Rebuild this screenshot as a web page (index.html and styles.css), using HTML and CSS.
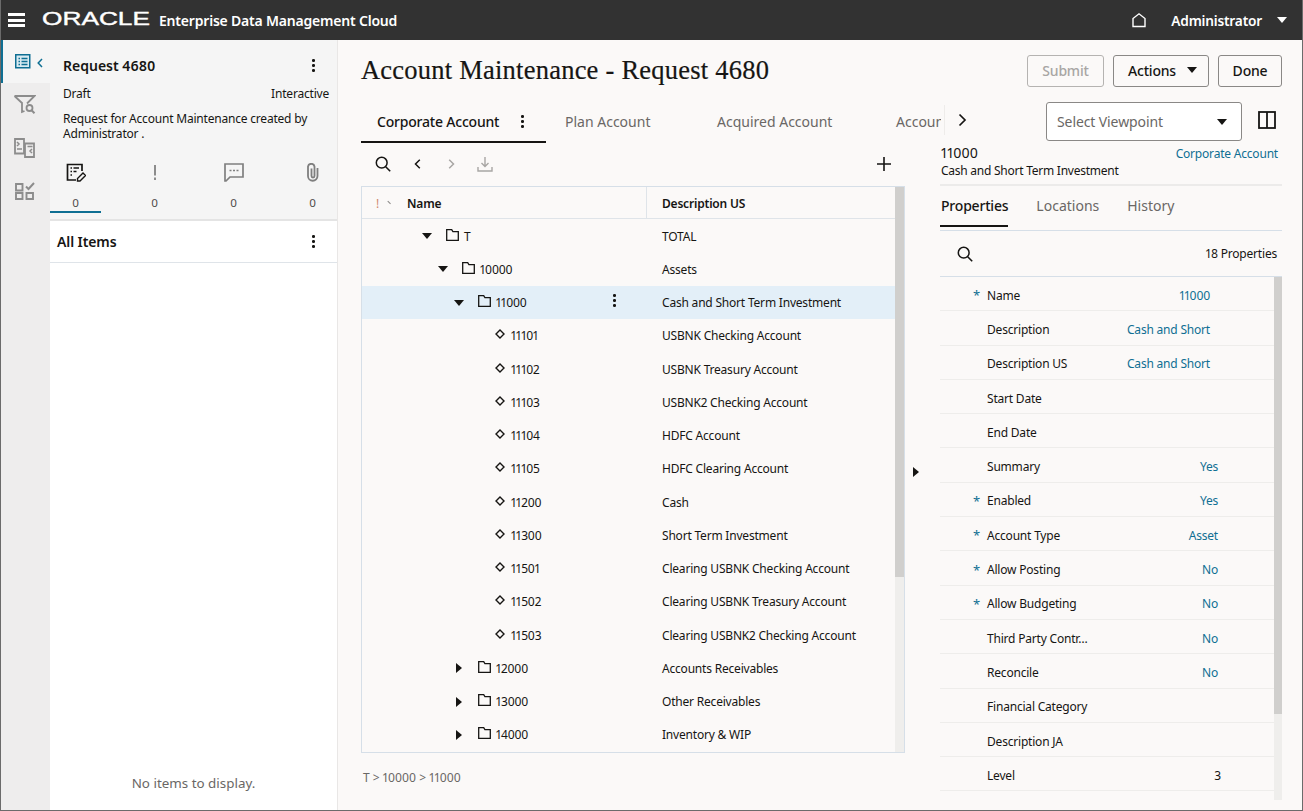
FILE: index.html
```html
<!DOCTYPE html>
<html lang="en">
<head>
<meta charset="utf-8">
<title>Account Maintenance - Request 4680</title>
<link rel="stylesheet" href="styles.css">
</head>
<body>
<div class="app">
  <header class="topbar">
    <button class="burger"><span></span><span></span><span></span></button>
    <svg class="logo" width="110" height="24" viewBox="0 0 110 24"><text x="0" y="17" textLength="108" lengthAdjust="spacingAndGlyphs" class="logo-text">ORACLE</text></svg>
    <span class="product">Enterprise Data Management Cloud</span>
    <span class="spacer"></span>
    <svg class="home" width="16" height="16" viewBox="0 0 16 16"><path d="M2 14.5V6.5L8 1.8l6 4.7v8z" fill="none" stroke="#fff" stroke-width="1.4"/></svg>
    <span class="user">Administrator</span>
    <span class="caret-down white"></span>
  </header>
  <div class="body">
    <nav class="rail">
      <div class="rail-item active">
        <svg width="16" height="15" viewBox="0 0 16 15"><rect x=".75" y=".75" width="14" height="13" fill="#d9ebf2" stroke="#0f6f93" stroke-width="1.5"/><path d="M3.5 4.5h1.5M3.5 7.5h1.5M3.5 10.5h1.5M6.5 4.5h6M6.5 7.5h6M6.5 10.5h6" stroke="#0f6f93" stroke-width="1.5"/></svg>
        <svg class="collapse" width="6" height="10" viewBox="0 0 6 10"><path d="M5 1L1.2 5 5 9" fill="none" stroke="#0f6f93" stroke-width="1.5"/></svg>
      </div>
      <div class="rail-item">
        <svg width="23" height="20" viewBox="0 0 23 20"><path d="M1.5 1h20l-7.5 7.5M9.5 8.5L1.5 1M9 8v9l2.5-1" fill="none" stroke="#8c8c8c" stroke-width="1.8"/><circle cx="16.5" cy="13" r="3" fill="none" stroke="#8c8c8c" stroke-width="1.8"/><path d="M18.8 15.5l2.7 2.7" stroke="#8c8c8c" stroke-width="2"/></svg>
      </div>
      <div class="rail-item">
        <svg width="21" height="20" viewBox="0 0 21 20"><path d="M10 15.5H1V1h9zM11 5.5h9V19h-9z" fill="none" stroke="#8c8c8c" stroke-width="1.8"/><path d="M3 4l2 2-2 2M3 11h5M13.5 8.5h5M18 11l-2 2 2 2" fill="none" stroke="#8c8c8c" stroke-width="1.5"/></svg>
      </div>
      <div class="rail-item">
        <svg width="20" height="19" viewBox="0 0 20 19"><path d="M1 3h6.5v6.5H1zM1 12h6.5v6H1zM11.5 12H18v6h-6.5z" fill="none" stroke="#8c8c8c" stroke-width="1.9"/><path d="M11 5.5l2.5 2.5L19 2" fill="none" stroke="#8c8c8c" stroke-width="2"/></svg>
      </div>
    </nav>
    <aside class="side">
      <section class="side-top">
        <div class="req-head"><h2>Request 4680</h2><span class="kebab"><i></i><i></i><i></i></span></div>
        <div class="req-meta"><span>Draft</span><span>Interactive</span></div>
        <p class="req-desc">Request for Account Maintenance created by Administrator .</p>
        <div class="counts">
          <div class="count on">
            <svg width="20" height="19" viewBox="0 0 20 19"><path d="M10 17H1.5V1.5H16V8" fill="none" stroke="#161513" stroke-width="1.7"/><path d="M4.5 5H6M7.500 5H13M4.500 8.500H6M7.500 8.500h3M4.500 12H6" stroke="#161513" stroke-width="1.5"/><path d="M11.500 18v-2.500l5.500-5.500 2.500 2.500-5.500 5.500z" fill="none" stroke="#161513" stroke-width="1.4"/></svg>
            <b>0</b>
          </div>
          <div class="count"><svg width="20" height="19" viewBox="0 0 20 19"><path d="M10 2v10.500M10 14.500V17" stroke="#8c8c8c" stroke-width="2"/></svg><b>0</b></div>
          <div class="count"><svg width="20" height="19" viewBox="0 0 20 19"><path d="M1 1h18v13H6l-4 4H1z" fill="none" stroke="#7f7f7f" stroke-width="1.7"/><path d="M5.500 7.500h2M9 7.500h2M12.500 7.500h2" stroke="#7f7f7f" stroke-width="1.6"/></svg><b>0</b></div>
          <div class="count"><svg width="20" height="19" viewBox="0 0 20 19"><path d="M9 5.500V13a1.500 1.500 0 0 0 3 0V3.500a3.300 3.300 0 0 0-6.500 0V13a4.700 4.700 0 0 0 9.500 0V5" fill="none" stroke="#7f7f7f" stroke-width="1.8" transform="translate(-.5 0)"/></svg><b>0</b></div>
        </div>
      </section>
      <section class="side-list">
        <div class="list-head"><h3>All Items</h3><span class="kebab"><i></i><i></i><i></i></span></div>
        <div class="list-empty">No items to display.</div>
      </section>
    </aside>
    <main class="main">
      <div class="title-row">
        <h1>Account Maintenance - Request 4680</h1>
        <div class="actions">
          <button class="btn disabled">Submit</button>
          <button class="btn btn-actions">Actions<span class="caret-down"></span></button>
          <button class="btn btn-done">Done</button>
        </div>
      </div>
      <div class="tabs-row">
        <div class="tabs">
          <div class="tab current">Corporate Account<span class="kebab"><i></i><i></i><i></i></span></div>
          <div class="tab t2">Plan Account</div>
          <div class="tab t3">Acquired Account</div>
          <div class="tab t4">Account</div>
        </div>
        <div class="tab-more"><svg width="9" height="14" viewBox="0 0 9 14"><path d="M1.500 1.500L7 7l-5.500 5.500" fill="none" stroke="#161513" stroke-width="1.7"/></svg></div>
        <div class="select"><span>Select Viewpoint</span><span class="caret-down"></span></div>
        <svg class="split" width="18" height="18" viewBox="0 0 18 18"><rect x="1" y="1" width="16" height="16" fill="none" stroke="#161513" stroke-width="1.8"/><path d="M9 1v16" stroke="#161513" stroke-width="1.8"/></svg>
      </div>
      <div class="work">
        <div class="center">
          <div class="toolbar">
            <svg class="ic-search" width="16" height="16" viewBox="0 0 16 16"><circle cx="6.7" cy="6.7" r="5.4" fill="none" stroke="#161513" stroke-width="1.5"/><path d="M10.7 10.7l4.5 4.5" stroke="#161513" stroke-width="1.6"/></svg>
            <svg class="ic-prev" width="7" height="10" viewBox="0 0 7 10"><path d="M5.8 .8L1.5 5l4.3 4.2" fill="none" stroke="#161513" stroke-width="1.5"/></svg>
            <svg class="ic-next" width="7" height="10" viewBox="0 0 7 10"><path d="M1.2 .8L5.5 5 1.2 9.2" fill="none" stroke="#a8a6a4" stroke-width="1.5"/></svg>
            <svg class="ic-down" width="16" height="16" viewBox="0 0 16 16"><path d="M8 1v9M4.5 7L8 10.5 11.5 7M1 11v4h14v-4" fill="none" stroke="#a8a6a4" stroke-width="1.4"/></svg>
            <span class="spacer"></span>
            <svg class="ic-plus" width="16" height="16" viewBox="0 0 16 16"><path d="M8 1v14M1 8h14" stroke="#161513" stroke-width="1.6"/></svg>
          </div>
          <div class="grid">
            <div class="grid-body">
              <div class="grid-head">
                <div class="cell-name head"><span class="bang">!</span><span class="tick"></span><span>Name</span></div>
                <div class="cell-desc head">Description US</div>
              </div>
              <div class="row"><div class="cell-name lv0"><span class="caret-tree open"></span><svg class="folder" width="13" height="12" viewBox="0 0 13 12"><path d="M.7.7h5l1.2 2h5.4v8.600H.7z" fill="none" stroke="#161513" stroke-width="1.3"/></svg><span>T</span></div><div class="cell-desc">TOTAL</div></div>
              <div class="row"><div class="cell-name lv1"><span class="caret-tree open"></span><svg class="folder" width="13" height="12" viewBox="0 0 13 12"><path d="M.7.7h5l1.2 2h5.4v8.600H.7z" fill="none" stroke="#161513" stroke-width="1.3"/></svg><span>10000</span></div><div class="cell-desc">Assets</div></div>
              <div class="row selected"><div class="cell-name lv2"><span class="caret-tree open"></span><svg class="folder" width="13" height="12" viewBox="0 0 13 12"><path d="M.7.7h5l1.2 2h5.4v8.600H.7z" fill="none" stroke="#161513" stroke-width="1.3"/></svg><span>11000</span><span class="kebab row-kebab"><i></i><i></i><i></i></span></div><div class="cell-desc">Cash and Short Term Investment</div></div>
              <div class="row"><div class="cell-name lv3"><svg class="node" width="10" height="10" viewBox="0 0 10 10"><path d="M5 1l4 4-4 4-4-4z" fill="none" stroke="#161513" stroke-width="1.4"/></svg><span>11101</span></div><div class="cell-desc">USBNK Checking Account</div></div>
              <div class="row"><div class="cell-name lv3"><svg class="node" width="10" height="10" viewBox="0 0 10 10"><path d="M5 1l4 4-4 4-4-4z" fill="none" stroke="#161513" stroke-width="1.4"/></svg><span>11102</span></div><div class="cell-desc">USBNK Treasury Account</div></div>
              <div class="row"><div class="cell-name lv3"><svg class="node" width="10" height="10" viewBox="0 0 10 10"><path d="M5 1l4 4-4 4-4-4z" fill="none" stroke="#161513" stroke-width="1.4"/></svg><span>11103</span></div><div class="cell-desc">USBNK2 Checking Account</div></div>
              <div class="row"><div class="cell-name lv3"><svg class="node" width="10" height="10" viewBox="0 0 10 10"><path d="M5 1l4 4-4 4-4-4z" fill="none" stroke="#161513" stroke-width="1.4"/></svg><span>11104</span></div><div class="cell-desc">HDFC Account</div></div>
              <div class="row"><div class="cell-name lv3"><svg class="node" width="10" height="10" viewBox="0 0 10 10"><path d="M5 1l4 4-4 4-4-4z" fill="none" stroke="#161513" stroke-width="1.4"/></svg><span>11105</span></div><div class="cell-desc">HDFC Clearing Account</div></div>
              <div class="row"><div class="cell-name lv3"><svg class="node" width="10" height="10" viewBox="0 0 10 10"><path d="M5 1l4 4-4 4-4-4z" fill="none" stroke="#161513" stroke-width="1.4"/></svg><span>11200</span></div><div class="cell-desc">Cash</div></div>
              <div class="row"><div class="cell-name lv3"><svg class="node" width="10" height="10" viewBox="0 0 10 10"><path d="M5 1l4 4-4 4-4-4z" fill="none" stroke="#161513" stroke-width="1.4"/></svg><span>11300</span></div><div class="cell-desc">Short Term Investment</div></div>
              <div class="row"><div class="cell-name lv3"><svg class="node" width="10" height="10" viewBox="0 0 10 10"><path d="M5 1l4 4-4 4-4-4z" fill="none" stroke="#161513" stroke-width="1.4"/></svg><span>11501</span></div><div class="cell-desc">Clearing USBNK Checking Account</div></div>
              <div class="row"><div class="cell-name lv3"><svg class="node" width="10" height="10" viewBox="0 0 10 10"><path d="M5 1l4 4-4 4-4-4z" fill="none" stroke="#161513" stroke-width="1.4"/></svg><span>11502</span></div><div class="cell-desc">Clearing USBNK Treasury Account</div></div>
              <div class="row"><div class="cell-name lv3"><svg class="node" width="10" height="10" viewBox="0 0 10 10"><path d="M5 1l4 4-4 4-4-4z" fill="none" stroke="#161513" stroke-width="1.4"/></svg><span>11503</span></div><div class="cell-desc">Clearing USBNK2 Checking Account</div></div>
              <div class="row"><div class="cell-name lv2"><span class="caret-tree closed"></span><svg class="folder" width="13" height="12" viewBox="0 0 13 12"><path d="M.7.7h5l1.2 2h5.4v8.600H.7z" fill="none" stroke="#161513" stroke-width="1.3"/></svg><span>12000</span></div><div class="cell-desc">Accounts Receivables</div></div>
              <div class="row"><div class="cell-name lv2"><span class="caret-tree closed"></span><svg class="folder" width="13" height="12" viewBox="0 0 13 12"><path d="M.7.7h5l1.2 2h5.4v8.600H.7z" fill="none" stroke="#161513" stroke-width="1.3"/></svg><span>13000</span></div><div class="cell-desc">Other Receivables</div></div>
              <div class="row"><div class="cell-name lv2"><span class="caret-tree closed"></span><svg class="folder" width="13" height="12" viewBox="0 0 13 12"><path d="M.7.7h5l1.2 2h5.4v8.600H.7z" fill="none" stroke="#161513" stroke-width="1.3"/></svg><span>14000</span></div><div class="cell-desc">Inventory &amp; WIP</div></div>
            </div>
            <div class="vbar"><div class="thumb tree-thumb"></div></div>
          </div>
          <div class="crumbs">T &gt; 10000 &gt; 11000</div>
        </div>
        <div class="splitter"><span class="caret-tree closed"></span></div>
        <div class="detail">
          <div class="d-head">
            <div class="d-title"><span class="d-id">11000</span><a class="d-link">Corporate Account</a></div>
            <div class="d-name">Cash and Short Term Investment</div>
          </div>
          <div class="d-tabs"><span class="d-tab current">Properties</span><span class="d-tab">Locations</span><span class="d-tab">History</span></div>
          <div class="d-search">
            <svg width="16" height="16" viewBox="0 0 16 16"><circle cx="6.7" cy="6.7" r="5.4" fill="none" stroke="#161513" stroke-width="1.5"/><path d="M10.7 10.7l4.5 4.5" stroke="#161513" stroke-width="1.6"/></svg>
            <span>18 Properties</span>
          </div>
          <div class="props">
            <div class="prop-list">
              <div class="prop"><i class="req">*</i><span class="k">Name</span><span class="v text">11000</span></div>
              <div class="prop"><i class="req"></i><span class="k">Description</span><span class="v text">Cash and Short</span></div>
              <div class="prop"><i class="req"></i><span class="k">Description US</span><span class="v text">Cash and Short</span></div>
              <div class="prop"><i class="req"></i><span class="k">Start Date</span></div>
              <div class="prop"><i class="req"></i><span class="k">End Date</span></div>
              <div class="prop"><i class="req"></i><span class="k">Summary</span><span class="v enum">Yes</span></div>
              <div class="prop"><i class="req">*</i><span class="k">Enabled</span><span class="v enum">Yes</span></div>
              <div class="prop"><i class="req">*</i><span class="k">Account Type</span><span class="v enum">Asset</span></div>
              <div class="prop"><i class="req">*</i><span class="k">Allow Posting</span><span class="v enum">No</span></div>
              <div class="prop"><i class="req">*</i><span class="k">Allow Budgeting</span><span class="v enum">No</span></div>
              <div class="prop"><i class="req"></i><span class="k">Third Party Contr…</span><span class="v enum">No</span></div>
              <div class="prop"><i class="req"></i><span class="k">Reconcile</span><span class="v enum">No</span></div>
              <div class="prop"><i class="req"></i><span class="k">Financial Category</span></div>
              <div class="prop"><i class="req"></i><span class="k">Description JA</span></div>
              <div class="prop"><i class="req"></i><span class="k">Level</span><span class="v num">3</span></div>
            </div>
            <div class="vbar"><div class="thumb prop-thumb"></div></div>
          </div>
        </div>
      </div>
    </main>
  </div>
</div>
</body>
</html>
```
FILE: styles.css
```css
* { box-sizing: border-box; }
html, body { margin: 0; height: 100%; overflow: hidden; }
body {
  width: 1303px; height: 811px; background: #6b6b6b;
  font-family: "Noto Sans", sans-serif; font-size: 12px; color: #161513;
  letter-spacing: -.2px; font-variant-numeric: proportional-nums;
}
h1, h2, h3, p { margin: 0; }
button { font: inherit; letter-spacing: inherit; }
.app { width: 1301px; height: 810px; margin-left: 1px; display: flex; flex-direction: column; background: #fbf9f8; }
.spacer { flex: 1; }

.topbar { height: 40px; flex: none; background: #323232; display: flex; align-items: center; color: #fff; padding-left: 7px; }
.burger { width: 17px; height: 14px; padding: 0; border: 0; background: none; display: flex; flex-direction: column; justify-content: space-between; }
.burger span { height: 3px; background: #fff; display: block; }
.logo { margin-left: 17px; margin-right: -2px; }
.logo-text { font-family: "Liberation Sans", sans-serif; font-size: 19px; fill: #fff; stroke: #fff; stroke-width: .4px; letter-spacing: 0; }
.product { margin-left: 9px; font-size: 14px; font-weight: 600; }
.home { margin-right: 24px; }
.user { font-size: 13.7px; font-weight: 600; }
.caret-down { display: inline-block; width: 0; height: 0; border-left: 5.5px solid transparent; border-right: 5.5px solid transparent; border-top: 6px solid #161513; }
.caret-down.white { border-top-color: #fff; margin: 0 15px 0 15px; }

.body { flex: 1; display: flex; min-height: 0; }
.rail { width: 49px; flex: none; background: #eeeded; }
.rail-item { height: 43px; display: flex; align-items: center; justify-content: center; padding-right: 2px; }
.rail-item.active { height: 43px; background: #f5f5f5; border-left: 2px solid #0f6f93; justify-content: flex-start; padding: 0 0 0 12px; gap: 6px; }
.collapse { margin-top: 3px; }

.side { width: 288px; flex: none; border-right: 1px solid #e9e7e6; display: flex; flex-direction: column; background: #fff; }
.side-top { height: 181px; flex: none; background: #f5f5f5; border-bottom: 2px solid #e4e4e4; }
.req-head { display: flex; justify-content: space-between; align-items: center; padding: 15px 22px 0 13px; height: 36px; }
.req-head h2 { font-size: 14px; font-weight: 600; letter-spacing: 0; }
.req-meta { display: flex; justify-content: space-between; padding: 10px 8px 0 13px; line-height: 16px; }
.req-desc { padding: 9px 20px 0 13px; line-height: 15px; }
.counts { display: flex; gap: 28px; margin-top: 21px; width: 288px; }
.count { width: 51px; height: 51px; display: flex; flex-direction: column; align-items: center; justify-content: space-between; color: #4f4c4a; padding-top: 1px; }
.count b { font-weight: 400; font-size: 11.5px; display: block; width: 100%; text-align: center; height: 17px; line-height: 14px; }
.count.on b { border-bottom: 2px solid #0f6f93; }
.kebab { display: inline-flex; flex-direction: column; gap: 2.4px; width: 3px; }
.kebab i { width: 2.6px; height: 2.6px; border-radius: 50%; background: #161513; display: block; }

.side-list { flex: 1; display: flex; flex-direction: column; }
.list-head { height: 42px; flex: none; border-bottom: 1px solid #dfe4e9; display: flex; align-items: center; justify-content: space-between; padding: 0 22px 0 7px; }
.list-head h3 { font-size: 14px; font-weight: 600; letter-spacing: -.1px; }
.list-empty { margin-top: auto; padding-bottom: 18px; text-align: center; color: #6a6765; font-size: 13.4px; letter-spacing: 0; }

.main { flex: 1; min-width: 0; display: flex; flex-direction: column; padding-left: 23px; }
.title-row { height: 60px; flex: none; display: flex; align-items: flex-start; justify-content: space-between; padding-top: 15px; padding-right: 20px; }
h1 { font-family: "Liberation Serif", serif; font-size: 26.5px; font-weight: 400; line-height: 32px; margin-top: -1px; letter-spacing: .23px; -webkit-text-stroke: .2px #161513; }
.actions { display: flex; gap: 9px; }
.btn { height: 32px; border: 1px solid #8a8886; border-radius: 3px; background: transparent; color: #161513; font-size: 14px; font-weight: 500; padding: 0 0 2px; }
.btn.disabled { width: 77px; color: #a8a6a4; border-color: #b5b3b1; }
.btn-actions { width: 96px; display: flex; align-items: center; justify-content: flex-start; gap: 11px; padding-left: 14px; }
.btn-done { width: 64px; }

.tabs-row { height: 44px; flex: none; display: flex; align-items: flex-start; margin-top: 2px; }
.tabs { width: 580px; height: 41px; overflow: hidden; display: flex; white-space: nowrap; margin-right: 3px; }
.tab { height: 41px; line-height: 40px; font-size: 14px; color: #6a6765; flex: none; letter-spacing: 0; }
.tab.current { width: 185px; color: #161513; font-weight: 500; letter-spacing: -.2px; border-bottom: 2px solid #161513; padding-left: 16px; display: flex; align-items: center; gap: 22px; }
.tab.t2 { margin-left: 19px; width: 152px; }
.tab.t3 { width: 179px; }
.tab-more { width: 36px; height: 30px; border-left: 1px solid #eeecea; display: flex; align-items: center; justify-content: center; margin-top: 3px; }
.select { margin-left: 66px; width: 196px; height: 39px; border: 1px solid #8a8886; border-radius: 3px; background: #fff; display: flex; align-items: center; justify-content: space-between; padding: 0 14px 0 10px; font-size: 14px; letter-spacing: -.1px; color: #6a6765; }
.split { margin: 9px 0 0 16px; }

.work { flex: 1; min-height: 0; display: flex; }
.center { width: 544px; flex: none; display: flex; flex-direction: column; }
.toolbar { height: 40px; flex: none; display: flex; align-items: center; padding: 0 13px 4px 14px; }
.ic-prev { margin-left: 23px; }
.ic-next { margin-left: 27px; }
.ic-down { margin-left: 22px; }
.grid { height: 567px; flex: none; display: flex; border: 1px solid #d6dfe8; }
.grid-body { flex: 1; min-width: 0; }
.grid-head { height: 32px; display: grid; grid-template-columns: 285px 1fr; border-bottom: 1px solid #dfe4e9; }
.head { font-weight: 600; font-size: 12px; }
.grid-head .cell-name { border-right: 1px solid #dfe4e9; padding-left: 14px; }
.bang { color: #d08a70; font-weight: 400; margin-right: 8px; }
.tick { width: 4px; height: 1.4px; background: #8a8886; transform: rotate(45deg); margin-right: 16px; }
.row { height: 33.25px; display: grid; grid-template-columns: 285px 1fr; }
.row.selected { background: #e3eff8; }
.cell-name { display: flex; align-items: center; min-width: 0; padding-top: 1px; }
.cell-desc { display: flex; align-items: center; padding-left: 15px; padding-top: 1px; }
.lv0 { padding-left: 59px; }
.lv1 { padding-left: 75px; }
.lv2 { padding-left: 91px; }
.lv3 { padding-left: 133px; }
.caret-tree { width: 11px; display: flex; justify-content: center; flex: none; }
.caret-tree::before { content: ""; width: 0; height: 0; border-style: solid; }
.caret-tree.open::before { border-width: 6px 5.5px 0; border-color: #161513 transparent transparent; }
.caret-tree.closed::before { border-width: 5.5px 0 5.5px 6px; border-color: transparent transparent transparent #161513; }
.folder { margin: -3px 5px 0 14px; flex: none; }
.node { margin: -3px 6px 0 0; flex: none; }
.row-kebab { margin-left: auto; margin-right: 31px; margin-top: -4px; }
.vbar { width: 9px; flex: none; background: #efeeec; }
.thumb { background: #d0cfcd; width: 100%; }
.tree-thumb { height: 390px; }
.crumbs { margin-top: 16px; padding-left: 2px; color: #6a6765; font-size: 12px; letter-spacing: 0; }

.splitter { width: 35px; flex: none; display: flex; align-items: center; justify-content: flex-start; padding: 0 0 12px 5px; }
.detail { width: 342px; flex: none; display: flex; flex-direction: column; min-height: 0; margin-top: -1px; }
.d-head { height: 41px; flex: none; border-bottom: 2px solid #ecebea; padding: 0 0 0 1px; }
.d-title { display: flex; justify-content: space-between; padding-right: 4px; line-height: 16px; }
.d-id { font-size: 14px; letter-spacing: 0; }
.d-link { color: #0f6f93; margin-top: 1px; }
.d-name { line-height: 17px; letter-spacing: -.25px; }
.d-tabs { height: 45px; flex: none; display: flex; gap: 28px; border-bottom: 1px solid #d6dfe8; }
.d-tab { height: 41px; line-height: 40px; font-size: 14px; color: #6a6765; letter-spacing: 0; }
.d-tab.current { color: #161513; font-weight: 500; letter-spacing: -.2px; padding-left: 1px; border-bottom: 2px solid #161513; }
.d-search { height: 46px; flex: none; display: flex; align-items: center; justify-content: space-between; padding: 0 5px 0 17px; border-bottom: 1px solid #d6dfe8; }
.props { flex: 1; min-height: 0; display: flex; }
.prop-list { flex: 1; min-width: 0; }
.prop { height: 34.3px; display: flex; align-items: center; border-bottom: 1px solid #eeedeb; padding-top: 3px; }
.req { width: 47px; flex: none; font-style: normal; color: #0f6f93; text-align: right; padding-right: 7px; font-size: 13px; }
.k { flex: none; }
.v { margin-left: auto; color: #0f6f93; }
.v.text { padding-right: 64px; }
.v.enum { padding-right: 56px; }
.v.num { padding-right: 53px; color: #161513; }
.props .vbar { width: 8px; height: 523px; }
.prop-thumb { height: 437px; }
```
